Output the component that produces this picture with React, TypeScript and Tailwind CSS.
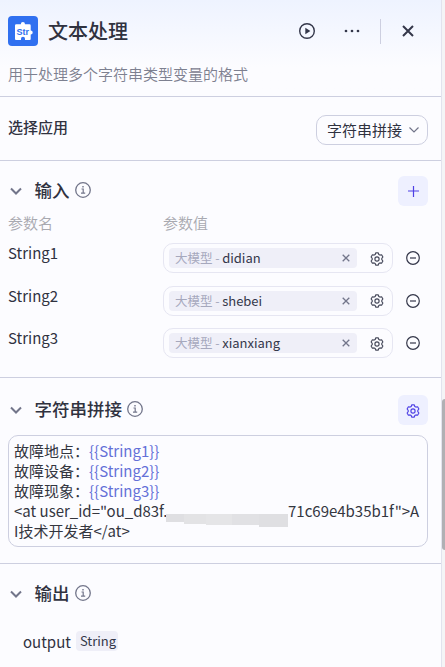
import type { ReactNode } from "react";

const params = [
  { id: "1", name: "String1", source: "大模型", value: "didian" },
  { id: "2", name: "String2", source: "大模型", value: "shebei" },
  { id: "3", name: "String3", source: "大模型", value: "xianxiang" },
];

const templateLines = [
  { label: "故障地点：", variable: "{{String1}}" },
  { label: "故障设备：", variable: "{{String2}}" },
  { label: "故障现象：", variable: "{{String3}}" },
];

const Gear = ({ className }: { className: string }) => (
  <svg viewBox="0 0 14 14" fill="none" stroke="currentColor" strokeWidth="1.15" strokeLinejoin="round" className={className}>
    <path d="M5.200 2.500 5.700.900h2.600l.5 1.600 1.100.6 1.700-.3 1.300 2.200-1.100 1.300v1.400l1.100 1.300-1.300 2.200-1.700-.3-1.100.6-.5 1.600H5.700l-.5-1.600-1.100-.6-1.700.3L1.100 9l1.100-1.300V6.300L1.100 5l1.300-2.200 1.700.3z" />
    <circle cx="7" cy="7" r="2.100" />
  </svg>
);

const Info = () => (
  <svg viewBox="0 0 16 16" fill="none" stroke="currentColor" className="size-4 text-[#72758a]">
    <circle cx="8" cy="8" r="7.300" strokeWidth="1.300" />
    <path d="M6.500 7h1.700v4M6 11.100h4.200" strokeWidth="1.200" />
    <path d="M7.300 4.700h1.400" strokeWidth="1.400" />
  </svg>
);

const SectionTitle = ({ title, children }: { title: string; children?: ReactNode }) => (
  <div className="flex h-[30px] items-start">
    <svg viewBox="0 0 12 8" fill="none" stroke="currentColor" strokeWidth="2" className="mt-[10.500px] ml-[2px] h-2 w-3 text-[#72758a]">
      <path d="M1 1.500 6 6.500l5-5" />
    </svg>
    <h3 className="mt-px ml-[12.500px] text-[17.500px] leading-[26px] font-medium text-[#30323f]">{title}</h3>
    <span className="mt-1.5 ml-[5px]">
      <Info />
    </span>
    <div className="ml-auto">{children}</div>
  </div>
);

const Header = () => (
  <header className="h-[97px] border-b border-[#cdcfe0] bg-gradient-to-b from-[#eef3ff] to-[#fcfcff] to-70% pt-4 pr-[13px] pl-2">
    <div className="flex h-[30px] items-center">
      <svg viewBox="0 0 30 30" className="size-[30px]">
        <rect width="30" height="30" rx="4" fill="#3070f0" />
        <path
          fill="#fff"
          d="M8.200 8.200h4.600a2.100 2.100 0 1 1 4.200 0h4.500a1.200 1.200 0 0 1 1.200 1.200v5a2 2 0 1 1 0 4V23a1 1 0 0 1-1 1H17v-1.300a2 2 0 0 0-4 0V24H8a1 1 0 0 1-1-1V9.400a1.200 1.200 0 0 1 1.200-1.200z"
        />
        <text x="14.800" y="19" textAnchor="middle" fill="#3070f0" fontSize="9" fontWeight="700" fontFamily="Liberation Sans, sans-serif">
          Str
        </text>
      </svg>
      <h1 className="ml-[10px] text-[20px] leading-[30px] font-medium text-[#30323f]">文本处理</h1>
      <div className="ml-auto flex items-center text-[#34374a]">
        <svg viewBox="0 0 16 16" className="size-4">
          <circle cx="8" cy="8" r="7.300" fill="none" stroke="currentColor" strokeWidth="1.400" />
          <path d="M6.300 4.700v6.600L11.400 8z" fill="currentColor" />
        </svg>
        <svg viewBox="0 0 16 4" fill="currentColor" className="ml-[29px] h-1 w-4">
          <circle cx="2" cy="2" r="1.350" />
          <circle cx="8" cy="2" r="1.350" />
          <circle cx="14" cy="2" r="1.350" />
        </svg>
        <div className="ml-5 h-[25px] w-px bg-[#cdcfe0]" />
        <svg viewBox="0 0 12 12" fill="none" stroke="currentColor" strokeWidth="2" className="mr-[14px] ml-[21px] size-3">
          <path d="m1 1 10 10M11 1 1 11" />
        </svg>
      </div>
    </div>
    <p className="mt-[17px] text-[15px] leading-[22px] font-[350] text-[#7d8090]">用于处理多个字符串类型变量的格式</p>
  </header>
);

const AppSelect = () => (
  <section className="flex h-16 items-start justify-between border-b border-[#cdcfe0] pr-[13px] pl-2">
    <span className="mt-[19px] text-[15px] leading-[22px] font-medium text-[#30323f]">选择应用</span>
    <button className="mt-[18px] flex h-[30px] w-[112px] items-center rounded-[10px] border border-[#cdcfe0] pl-[10px] text-[15px] leading-[22px] text-[#30323f]">
      字符串拼接
      <svg viewBox="0 0 10 6" fill="none" stroke="currentColor" strokeWidth="1.200" className="ml-[7px] h-1.5 w-2.5 text-[#72758a]">
        <path d="m.5.5 4.500 4.500L9.500.5" />
      </svg>
    </button>
  </section>
);

const Inputs = () => (
  <section className="h-[217px] border-b border-[#cdcfe0] pt-[15px] pr-[13px] pl-2">
    <SectionTitle title="输入">
      <button className="flex size-[30px] items-center justify-center rounded-md bg-[#eef0ff] text-[#4e40e5]">
        <svg viewBox="0 0 11 11" stroke="currentColor" strokeWidth="1.200" className="size-[11px]">
          <path d="M5.500 0v11M0 5h11" />
        </svg>
      </button>
    </SectionTitle>
    <div className="mt-1.5 flex text-[15px] leading-[22px] font-[350] text-[#a8a9b0]">
      <span className="w-[155px]">参数名</span>
      <span>参数值</span>
    </div>
    <div className="mt-[9px] flex flex-col gap-[12.500px]">
      {params.map((param) => (
        <div key={param.id} className="flex h-[30px] items-start">
          <span className="w-[155px] text-[15px] leading-5 text-[#30323f]">{param.name}</span>
          <div className="flex h-[30px] w-[230px] items-center rounded-[10px] border border-[#e6e6f2] pl-[5px]">
            <div className="flex h-5 w-[188px] items-center rounded bg-[#efeff8] pr-[7px] pl-1.5 text-[13px] leading-5">
              <span className="text-[12.500px] text-[#a6a8bd]">{param.source} -</span>
              <span className="ml-[2.500px] text-[13px] text-[#34374a]">{param.value}</span>
              <svg viewBox="0 0 8 8" fill="none" stroke="currentColor" strokeWidth="1.300" className="ml-auto size-2 text-[#72758a]">
                <path d="m.7.7 6.600 6.600M7.300.7.7 7.300" />
              </svg>
            </div>
            <Gear className="mt-px ml-[13px] size-[14px] text-[#45485a]" />
          </div>
          <svg viewBox="0 0 14 14" fill="none" stroke="currentColor" strokeWidth="1.200" className="mt-2 ml-[13px] size-[14px] text-[#34374a]">
            <circle cx="7" cy="7" r="6.300" />
            <path d="M4 7h6" />
          </svg>
        </div>
      ))}
    </div>
  </section>
);

const Template = () => (
  <section className="h-[186px] border-b border-[#cdcfe0] pt-[17px] pr-[13px] pl-2">
    <SectionTitle title="字符串拼接">
      <button className="flex size-[30px] items-center justify-center rounded-md bg-[#eef0ff] text-[#4e40e5]">
        <Gear className="mt-px size-[14px]" />
      </button>
    </SectionTitle>
    <div className="mt-2.5 h-28 rounded-[10px] border border-[#cdcfe0] pt-[5px] pl-[5px] text-[15px] leading-5 whitespace-nowrap text-[#34363f]">
      {templateLines.map((line) => (
        <p key={line.variable}>
          {line.label}
          <span className="text-[#6470d8]">{line.variable}</span>
        </p>
      ))}
      <div className="flex h-5">
        <span className="w-[152px]">&lt;at user_id="ou_d83f.</span>
        {/* masked part of the user id */}
        <span className="flex w-[122px] items-start pt-[13px]">
          <span className="h-[8px] w-[18px] bg-[#dfdfe2]" />
          <span className="h-[10px] w-[22px] bg-[#e3e3e5]" />
          <span className="h-[11px] w-[26px] bg-[#e5e5e7]" />
          <span className="h-[11px] w-[27px] bg-[#e1e1e4]" />
          <span className="h-[13px] w-[29px] bg-[#dfdfe2]" />
        </span>
        <span>71c69e4b35b1f"&gt;A</span>
      </div>
      <p>I技术开发者&lt;/at&gt;</p>
    </div>
  </section>
);

const Output = () => (
  <section className="pt-[15px] pr-[13px] pl-2">
    <SectionTitle title="输出" />
    <div className="mt-[22px] ml-[15px] flex items-start">
      <span className="text-[15px] leading-[22px] text-[#30323f]">output</span>
      <span className="ml-[5px] flex h-5 w-[42px] items-center rounded bg-[#efeff8] px-1 text-[13px] leading-5 text-[#34374a]">String</span>
    </div>
  </section>
);

const App = () => {
  return (
    <div className="flex h-[667px] w-[445px] overflow-hidden bg-[#f4f4f6] font-['Noto_Sans_CJK_SC',sans-serif]">
      <main className="w-[442px] shrink-0 border-r border-[#e2e3ee] bg-[#fcfcff]">
        <Header />
        <AppSelect />
        <Inputs />
        <Template />
        <Output />
      </main>
      {/* Scrollbar thumb */}
      <div className="mt-[399px] h-[151px] w-[3px] rounded-l-sm bg-[#b0b0b4]" />
    </div>
  );
};

export default App;
